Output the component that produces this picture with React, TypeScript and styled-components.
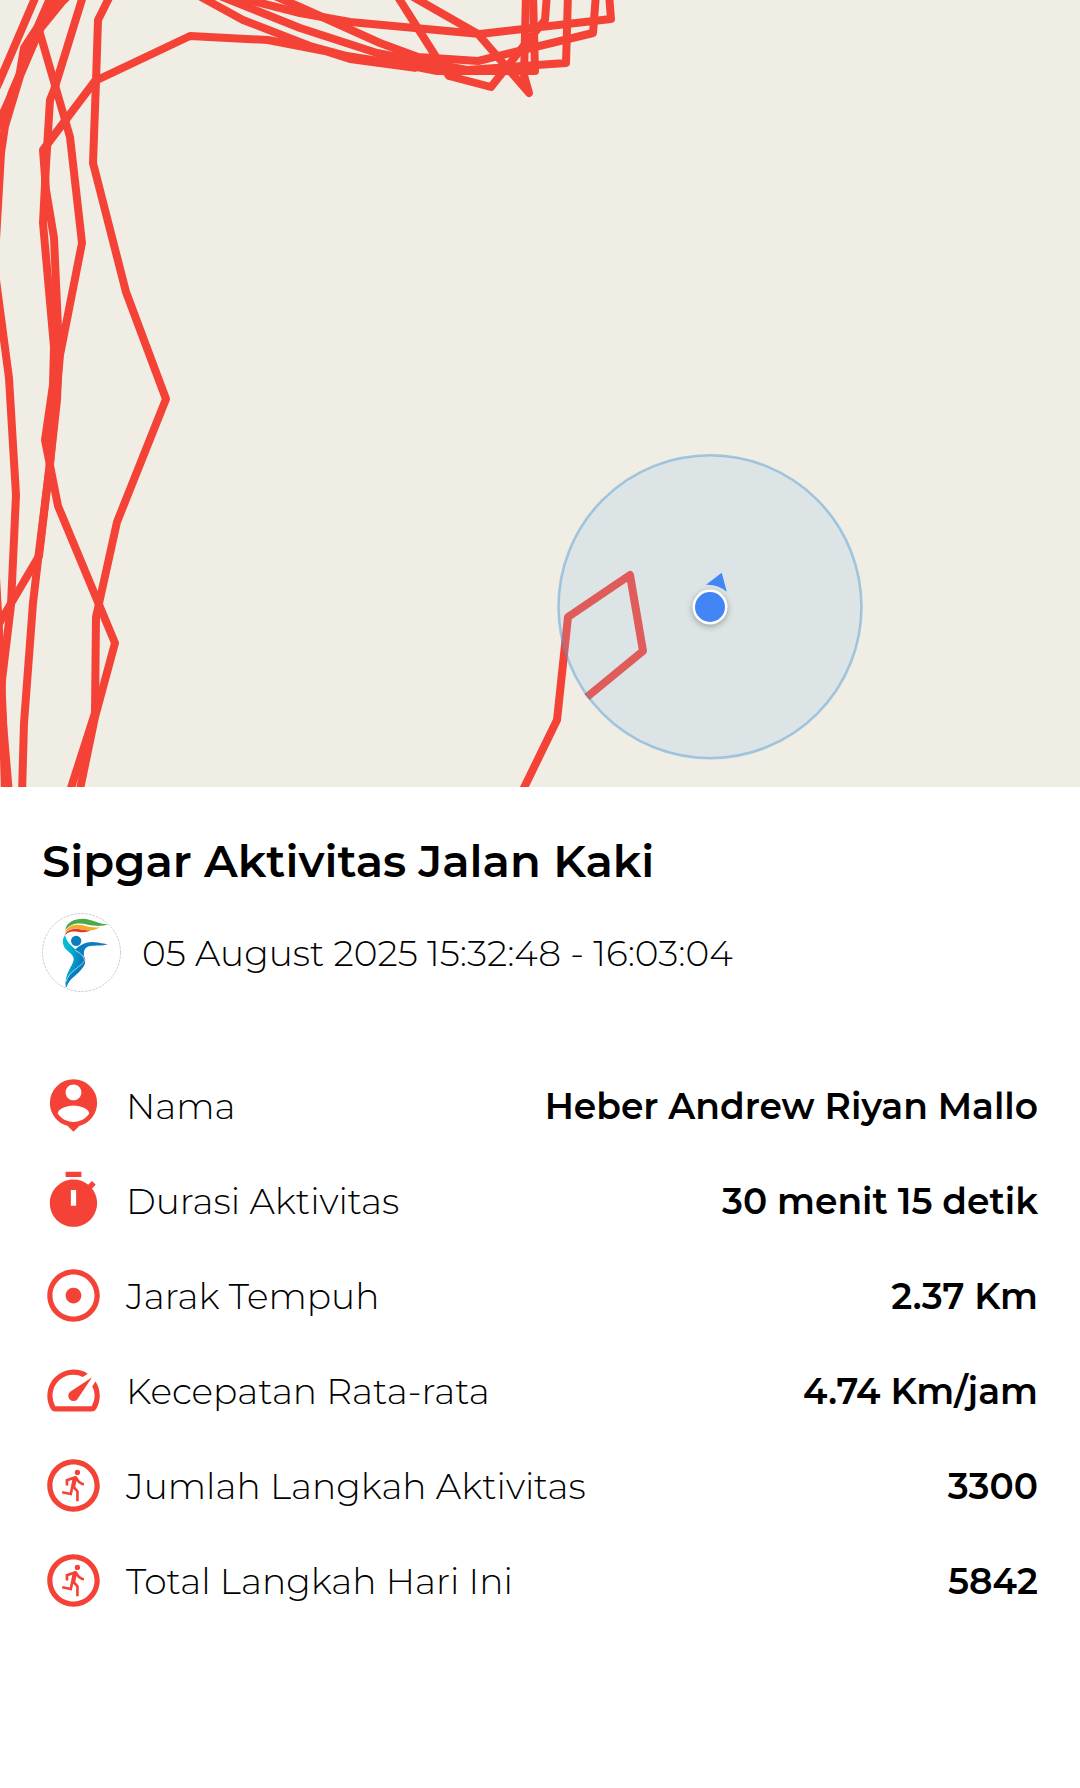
import React from "react";
import styled, { createGlobalStyle } from "styled-components";

const GlobalStyle = createGlobalStyle`
  *, *::before, *::after { box-sizing: border-box; }
  body {
    margin: 0;
    background: #fff;
    color: #000;
    font-family: Montserrat, Inter, "Open Sans", sans-serif;
  }
`;

const Page = styled.main`
  width: 100%;
`;

const MapView = styled.section`
  background: #f0ede4;
  aspect-ratio: 1080 / 787;
  overflow: hidden;
`;

const MapCanvas = styled.svg`
  display: block;
  width: 100%;
  height: 100%;
`;

const Summary = styled.section`
  padding: 46px 42px;
`;

const Title = styled.h1`
  margin: 0 0 24px;
  font-size: 45px;
  line-height: 56px;
  font-weight: 600;
`;

const Meta = styled.div`
  display: flex;
  align-items: center;
  gap: 21px;
  margin-bottom: 82px;
`;

const Avatar = styled.svg`
  flex: none;
  width: 79px;
  height: 79px;
`;

const Period = styled.time`
  font-size: 36px;
  line-height: 48px;
  font-weight: 300;
`;

const StatList = styled.dl`
  display: flex;
  flex-direction: column;
  gap: 32px;
  margin: 0;
`;

const StatRow = styled.div`
  display: flex;
  align-items: center;
  gap: 21px;
  min-height: 63px;
`;

const StatIcon = styled.svg`
  flex: none;
  width: 63px;
  height: 63px;
  fill: #f44336;
`;

const StatLabel = styled.dt`
  font-size: 36px;
  line-height: 48px;
  font-weight: 300;
`;

const StatValue = styled.dd`
  margin: 0 0 0 auto;
  font-size: 36px;
  line-height: 48px;
  font-weight: 600;
  text-align: right;
`;

const tracks = [
  "36,-4 0,80 -12,106",
  "52,-6 37,28 24,48 19,78 0,120 -10,146",
  "60,-10 40,29 25,62 12,92 0,130",
  "74,-10 62,2 40,29 20,76 5,126 1,153 -4,240",
  "39,30 70,137 82,243 60,355 56,400 50,463 39,556 0,622 -8,634",
  "83,-4 54,90 50,100 46,165 43,223 54,347 53,385 45,440 58,506 115,643 95,717 79,794",
  "111,-6 98,20 96,81 93,163 126,292 166,399 117,522 96,617 95,713 69,794",
  "417,68 350,59 325,51 268,40 190,36 95,81 43,150 46,190 54,238 59,350 57,400 50,463 38,560 33,603 24,723 22,794",
  "-4,280 9,378 16,495 11,605 2,680 1,700 9,794",
  "-5,560 -1,630 3,720 5,794",
  "192,-8 243,20 310,46 347,56 417,67 437,71 535,71 533,-6",
  "215,-6 300,28 377,53 467,70 566,63 568,-6",
  "270,-6 300,7 340,25 380,43 418,57 478,61 593,33 596,-6",
  "225,-6 253,1 300,13 350,22 480,34 611,19 609,-6",
  "396,-6 438,60 449,76 491,87 522,48 545,20 547,-6",
  "408,-6 478,34 529,93 524,75 526,-6",
  "521,794 557,720 568,617 630,575 643,651 587,697",
];

const RouteMap = () => (
  <MapView>
    <MapCanvas viewBox="0 0 1080 787" preserveAspectRatio="xMidYMid slice" role="img" aria-label="Peta rute">
      <g fill="none" stroke="#f44336" strokeWidth="8" strokeLinejoin="round">
        {tracks.map((points) => (
          <polyline key={points} points={points} />
        ))}
      </g>
      <circle cx="710" cy="606.7" r="151.5" fill="rgba(140,197,233,.2)" stroke="#4a98d4" strokeOpacity=".45" strokeWidth="2.6" />
      <path d="M721.7 572.7L726.8 591.7Q717.5 584 706 584.7Z" fill="#4285f4" />
      <circle cx="710" cy="607" r="17.5" fill="#fff" style={{ filter: "drop-shadow(0 2px 3px rgba(0,0,0,.3))" }} />
      <circle cx="710" cy="607" r="15" fill="#4285f4" />
    </MapCanvas>
  </MapView>
);

const Logo = () => (
  <Avatar viewBox="12 15 237 237" aria-hidden="true">
    <defs>
      <linearGradient id="ribbon" x1="0" y1="0" x2="1" y2="0.5">
        <stop offset="0" stopColor="#00c4d8" />
        <stop offset="0.4" stopColor="#06add0" />
        <stop offset="0.9" stopColor="#0879bd" />
      </linearGradient>
    </defs>
    <circle cx="130.500" cy="133.500" r="117" fill="#fff" stroke="#b4b4b4" strokeWidth="2" strokeDasharray="8 3" />
    <path d="M82 66C85 43 108 32 135 32C160 33 180 48 210 49C192 56 168 54 150 50C122 43 98 46 82 66Z" fill="#4aab48" />
    <path d="M81 74C86 54 112 47 135 52C155 58 170 60 186 58C168 69 150 69 135 65C113 60 94 61 81 74Z" fill="#f4ab2c" />
    <path d="M80 83C84 66 104 60 125 64C138 67 148 68 157 67C145 75 130 73 118 71C98 68 87 73 80 83Z" fill="#e1382f" />
    <circle cx="114.500" cy="98.500" r="15.500" fill="#0a7dbe" />
    <path d="M110 126C125 111 144 101 165 102C185 103 198 108 210 109C190 115 172 112 158 114C142 116 136 126 138 144L124 138Z" fill="#0a7dbe" />
    <path d="M81 82C72 92 72 112 84 124C97 137 108 143 107 155C104 175 78 197 83 237L86 237C91 216 107 208 122 193C138 176 144 163 141 151C135 132 91 121 81 82Z" fill="url(#ribbon)" />
    <path d="M112 127C128 136 137 144 140 158C125 180 92 190 84 222" fill="none" stroke="#fff" strokeWidth="2" />
    <path d="M86 237C91 216 107 208 122 193C138 176 143 167 140 160C125 184 94 190 85 224Z" fill="#0a7dbe" />
  </Avatar>
);

const icons = {
  person:
    "M12 2a9 9 0 0 0-9 9c0 4.17 2.84 7.67 6.69 8.69L12 22l2.31-2.31C18.16 18.67 21 15.17 21 11a9 9 0 0 0-9-9zm0 2c1.66 0 3 1.34 3 3s-1.34 3-3 3-3-1.34-3-3 1.34-3 3-3zm0 14.300c-2.500 0-4.710-1.280-6-3.220.03-1.990 4-3.080 6-3.080 1.990 0 5.970 1.090 6 3.080-1.290 1.940-3.500 3.220-6 3.220z",
  timer:
    "M15 1H9v2h6V1zm4.030 6.390l1.420-1.420c-.43-.51-.9-.99-1.410-1.410l-1.420 1.420A8.962 8.962 0 0 0 12 4c-4.970 0-9 4.030-9 9s4.020 9 9 9a8.994 8.994 0 0 0 7.030-14.610zM13 14h-2V8h2v6z",
  target:
    "M12 2C6.490 2 2 6.490 2 12s4.490 10 10 10 10-4.490 10-10S17.510 2 12 2zm0 18c-4.410 0-8-3.590-8-8s3.590-8 8-8 8 3.590 8 8-3.590 8-8 8zm3-8c0 1.660-1.340 3-3 3s-3-1.340-3-3 1.340-3 3-3 3 1.340 3 3z",
  speed:
    "M20.380 8.570l-1.230 1.850a8 8 0 0 1-.22 7.580H5.070A8 8 0 0 1 15.580 6.850l1.850-1.230A10 10 0 0 0 3.350 19a2 2 0 0 0 1.720 1h13.850a2 2 0 0 0 1.740-1 10 10 0 0 0-.27-10.440zM10.590 15.410a2 2 0 0 0 2.830 0l5.660-8.490-8.490 5.660a2 2 0 0 0 0 2.830z",
  run:
    "M12 2C6.480 2 2 6.480 2 12s4.480 10 10 10 10-4.480 10-10S17.520 2 12 2zm0 18c-4.410 0-8-3.590-8-8s3.590-8 8-8 8 3.590 8 8-3.590 8-8 8zM13.500 6a1 1 0 1 0 0 2 1 1 0 1 0 0-2zM16 12c-.7 0-2.010-.54-2.910-1.760l-.41 2.350L14 14.030V18h-1v-3.580l-1.110-1.210-.52 2.640L7.600 15.080l.2-.98 2.780.57.96-4.890L10 10.350V12H9V9.650l3.280-1.210c.49-.18 1.030.06 1.260.53.83 1.700 2.050 2.030 2.460 2.030v1z",
};

const stats: { icon: keyof typeof icons; label: string; value: string }[] = [
  { icon: "person", label: "Nama", value: "Heber Andrew Riyan Mallo" },
  { icon: "timer", label: "Durasi Aktivitas", value: "30 menit 15 detik" },
  { icon: "target", label: "Jarak Tempuh", value: "2.37 Km" },
  { icon: "speed", label: "Kecepatan Rata-rata", value: "4.74 Km/jam" },
  { icon: "run", label: "Jumlah Langkah Aktivitas", value: "3300" },
  { icon: "run", label: "Total Langkah Hari Ini", value: "5842" },
];

export default function App() {
  return (
    <Page>
      <GlobalStyle />
      <RouteMap />
      <Summary>
        <Title>Sipgar Aktivitas Jalan Kaki</Title>
        <Meta>
          <Logo />
          <Period>05 August 2025 15:32:48 - 16:03:04</Period>
        </Meta>
        <StatList>
          {stats.map(({ icon, label, value }) => (
            <StatRow key={label}>
              <StatIcon viewBox="0 0 24 24" aria-hidden="true">
                <path d={icons[icon]} fillRule="evenodd" />
              </StatIcon>
              <StatLabel>{label}</StatLabel>
              <StatValue>{value}</StatValue>
            </StatRow>
          ))}
        </StatList>
      </Summary>
    </Page>
  );
}
